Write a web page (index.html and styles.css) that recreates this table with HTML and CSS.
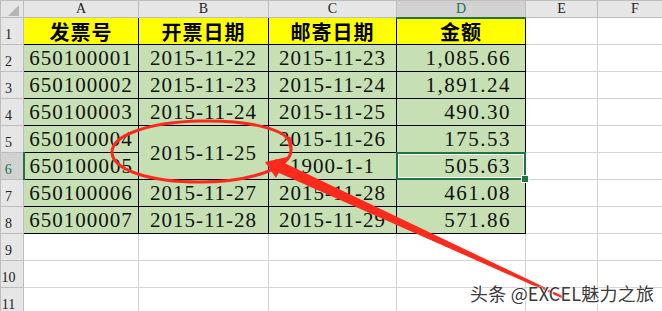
FILE: index.html
```
<!DOCTYPE html>
<html lang="zh">
<head>
<meta charset="utf-8">
<title>Sheet</title>
<link rel="stylesheet" href="styles.css">
</head>
<body>
<div class="page">
  <table class="sheet">
    <colgroup>
      <col class="c-hd"><col class="c-a"><col class="c-b"><col class="c-c"><col class="c-d"><col class="c-e"><col class="c-f">
    </colgroup>
    <tr class="colhead">
      <th class="corner"><svg class="tri" width="11" height="11" viewBox="0 0 11 11"><polygon points="11,0 11,11 0,11" fill="#b5b5b5"/></svg></th>
      <th>A</th><th>B</th><th>C</th><th class="csel">D</th><th>E</th><th>F</th>
    </tr>
    <tr>
      <th class="rh">1</th>
      <td class="hd">发票号</td><td class="hd">开票日期</td><td class="hd">邮寄日期</td><td class="hd">金额</td><td></td><td></td>
    </tr>
    <tr>
      <th class="rh">2</th>
      <td class="dt">650100001</td><td class="dt">2015-11-22</td><td class="dt">2015-11-23</td><td class="dt num">1,085.66</td><td></td><td></td>
    </tr>
    <tr>
      <th class="rh">3</th>
      <td class="dt">650100002</td><td class="dt">2015-11-23</td><td class="dt">2015-11-24</td><td class="dt num">1,891.24</td><td></td><td></td>
    </tr>
    <tr>
      <th class="rh">4</th>
      <td class="dt">650100003</td><td class="dt">2015-11-24</td><td class="dt">2015-11-25</td><td class="dt num">490.30</td><td></td><td></td>
    </tr>
    <tr>
      <th class="rh">5</th>
      <td class="dt">650100004</td><td class="dt merged" rowspan="2">2015-11-25</td><td class="dt">2015-11-26</td><td class="dt num">175.53</td><td></td><td></td>
    </tr>
    <tr>
      <th class="rh rsel">6</th>
      <td class="dt">650100005</td><td class="dt">1900-1-1</td><td class="dt num active">505.63<span class="handle"></span></td><td></td><td></td>
    </tr>
    <tr>
      <th class="rh">7</th>
      <td class="dt">650100006</td><td class="dt">2015-11-27</td><td class="dt">2015-11-28</td><td class="dt num">461.08</td><td></td><td></td>
    </tr>
    <tr>
      <th class="rh">8</th>
      <td class="dt">650100007</td><td class="dt">2015-11-28</td><td class="dt">2015-11-29</td><td class="dt num">571.86</td><td></td><td></td>
    </tr>
    <tr>
      <th class="rh">9</th><td></td><td></td><td></td><td></td><td></td><td></td>
    </tr>
    <tr>
      <th class="rh">10</th><td></td><td></td><td></td><td></td><td></td><td></td>
    </tr>
    <tr>
      <th class="rh">11</th><td></td><td></td><td></td><td></td><td></td><td></td>
    </tr>
  </table>

  <svg class="marks" width="662" height="311" viewBox="0 0 662 311">
    <path d="M290 146 C 292 130, 250 120, 200 121 C 150 122, 112 135, 112 152 C 112 170, 150 182, 200 182 C 250 182, 291 168, 291 150 C 291 146, 290 140, 289 138 M291 147 C 292 155, 288 160, 282 163" fill="none" stroke="#fa2a1c" stroke-width="3" stroke-linecap="round"/>
    <polygon points="265,162 287,157 276,178" fill="#fa2a1c"/>
    <polygon points="270,169 276,159 563.6,296.4 562.6,298.4" fill="#fa2a1c"/>
  </svg>

  <div class="watermark">头条 @EXCEL魅力之旅</div>
</div>
</body>
</html>
```
FILE: styles.css
```
html, body {
  margin: 0;
  padding: 0;
  background: #ffffff;
  overflow: hidden;
}

.page {
  position: relative;
  width: 662px;
  height: 311px;
  overflow: hidden;
}

.sheet {
  border-collapse: collapse;
  table-layout: fixed;
  width: 672px;
}

.c-hd { width: 23px; }
.c-a { width: 115px; }
.c-b { width: 130px; }
.c-c { width: 128px; }
.c-d { width: 129px; }
.c-e { width: 72px; }
.c-f { width: 75px; }

.sheet td,
.sheet th {
  padding: 0;
  border: 1px solid #d4d4d4;
  height: 27px;
  box-sizing: border-box;
  white-space: nowrap;
  overflow: visible;
}

.colhead th {
  height: 17px;
  background: #e6e6e6;
  border-color: #bdbdbd;
  font-family: "Liberation Serif", serif;
  font-weight: normal;
  font-size: 14px;
  line-height: 14px;
  color: #222;
  text-align: center;
  vertical-align: middle;
}

.colhead th.corner {
  position: relative;
  text-align: left;
  vertical-align: top;
}

.tri {
  display: block;
  margin: 4px 0 0 7px;
}

.colhead th.csel {
  background: #d2d2d2;
  color: #217346;
  border-bottom: 2px solid #217346;
}

.rh {
  background: #e6e6e6;
  border-color: #bdbdbd !important;
  font-family: "Liberation Serif", serif;
  font-weight: normal;
  font-size: 14px;
  line-height: 14px;
  color: #222;
  text-align: center;
  vertical-align: bottom;
  padding: 0 7px 2px 0 !important;
}

.rh.rsel {
  background: #d2d2d2;
  color: #217346;
  border-right: 2px solid #217346 !important;
}

.hd {
  background: #ffff00;
  border-color: #000 !important;
  font-family: "Noto Sans CJK SC", sans-serif;
  font-weight: 700;
  font-size: 20px;
  letter-spacing: 1px;
  line-height: 24px;
  text-align: center;
  vertical-align: bottom;
  color: #000;
}

.dt {
  background: #c6e0b4;
  border-color: #000 !important;
  font-family: "Liberation Serif", "Noto Sans CJK SC", serif;
  font-size: 21px;
  line-height: 22px;
  letter-spacing: 1px;
  text-align: center;
  vertical-align: bottom;
  color: #111;
  padding-bottom: 2px !important;
}

.dt.merged {
  vertical-align: middle;
  padding-bottom: 0 !important;
}

.dt.num {
  text-align: right;
  padding-right: 14px !important;
  letter-spacing: 1.5px;
}

.dt.active {
  position: relative;
}

.dt.active::after {
  content: "";
  position: absolute;
  left: -1px;
  top: -1px;
  right: -1px;
  bottom: -1px;
  border: 2px solid #217346;
  box-shadow: inset 0 0 0 1px #ffffff;
  pointer-events: none;
}

.handle {
  position: absolute;
  right: -4px;
  bottom: -4px;
  width: 6px;
  height: 6px;
  background: #217346;
  border: 1px solid #ffffff;
  z-index: 2;
}

.marks {
  position: absolute;
  left: 0;
  top: 0;
  pointer-events: none;
}

.watermark {
  position: absolute;
  left: 470px;
  top: 282px;
  font-family: "Noto Sans CJK SC", sans-serif;
  font-size: 18px;
  line-height: 22px;
  letter-spacing: 0.2px;
  color: #3a3a3a;
  white-space: nowrap;
  text-shadow: 0 0 2px #ffffff, 0 0 2px #ffffff, 1px 1px 0 #ffffff;
}
```
